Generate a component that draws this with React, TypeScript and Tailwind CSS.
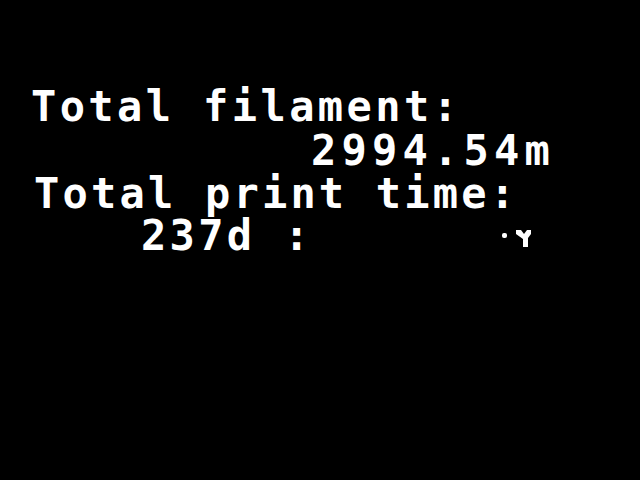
export default function App() {
  const line = "whitespace-pre h-[42px] leading-[42px] text-[42px] font-bold";
  return (
    <div
      className="w-[640px] h-[480px] bg-black text-white overflow-hidden"
      style={{ fontFamily: '"DejaVu Sans Mono", "Liberation Mono", monospace' }}
    >
      <div className="flex flex-col pt-[86px]">
        <div className={`${line} tracking-[3.4px] pl-[31px]`}>Total filament:</div>
        <div className={`${line} tracking-[5.2px] pl-[311px] mt-[2px]`}>2994.54m</div>
        <div className={`${line} tracking-[3.2px] pl-[34px] mt-[1px]`}>Total print time:</div>
        <div className={`${line} tracking-[3.3px] pl-[141px] flex items-start`}>
          <span>237d :</span>
          <svg width="40" height="30" viewBox="0 0 40 30" className="ml-[186px] mt-[10px]">
            <rect x="3" y="8" width="5" height="5" rx="2" fill="white" />
            <path d="M17 5 L22 5 L25 9 L28 5 L32 5 L32 9 L29 13 L29 22 L24 22 L24 14 L17 9 Z" fill="white" />
          </svg>
        </div>
      </div>
    </div>
  );
}
